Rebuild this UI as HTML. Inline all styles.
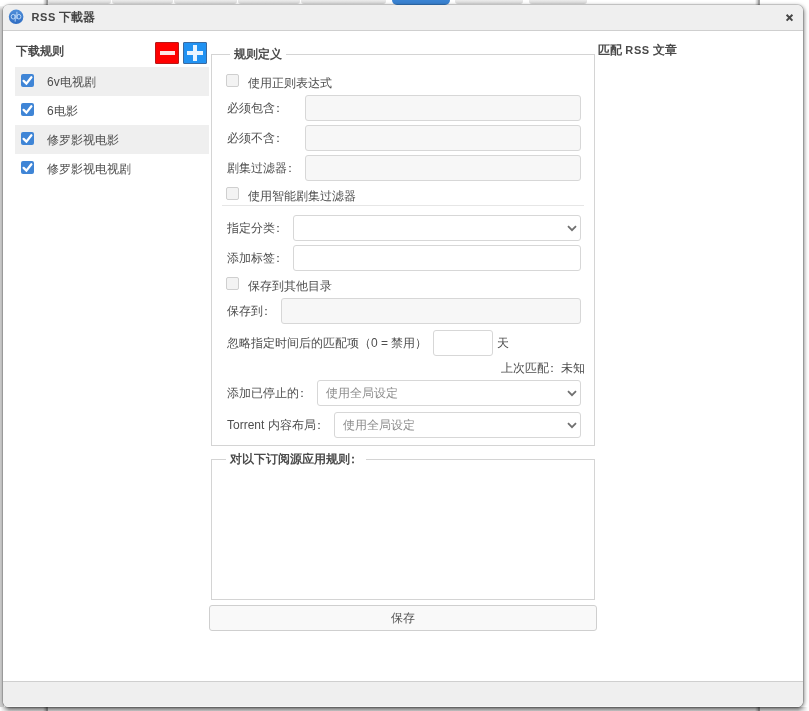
<!DOCTYPE html>
<html><head><meta charset="utf-8">
<style>
*{box-sizing:border-box;margin:0;padding:0}
html,body{width:809px;height:711px;overflow:hidden;}
body{will-change:transform;background:#fafafa;font-family:"Liberation Sans",sans-serif;font-size:12px;color:#4e4e4e}
.abs{position:absolute}
.co{position:relative;left:-3px}
#bg{left:0;top:0;width:809px;height:711px;background:#fff}
.tab{position:absolute;top:-6px;height:10px;background:linear-gradient(#f6f6f6 40%,#d6d6d6);border-radius:0 0 3px 3px}
.vline{position:absolute;width:5px;background:linear-gradient(90deg,rgba(0,0,0,0),rgba(0,0,0,.25) 60%,rgba(0,0,0,.55) 85%,rgba(0,0,0,0))}
#dlg{left:3px;top:5px;width:800px;height:702px;background:#fff;border-radius:6px;box-shadow:0 0 0 1px rgba(0,0,0,.12),1px 1px 4px 0 rgba(0,0,0,.55);overflow:hidden}
#title{left:0;top:0;width:800px;height:26px;background:#efefef;border-bottom:1px solid #cfcfcf}
#foot{left:0;top:676px;width:800px;height:26px;background:#efefef;border-top:1px solid #cfcfcf;box-shadow:inset 0 -1px 0 #f7f7f7}
.lbl{position:absolute;white-space:nowrap;line-height:14px}
.b{font-weight:bold;color:#4a4a4a}
.row{position:absolute;left:12px;width:194px;height:29px}
.row.hl{background:#efefef}
.cb{position:absolute;width:13px;height:13px;border-radius:2px}
.cb.on{background:#3f85d6;}
.cb.off{background:#f3f3f3;border:1px solid #cfcfcf}
.inp{position:absolute;height:26px;border:1px solid #d7d7d7;border-radius:3px;background:#fff}
.inp.dis{background:#f7f7f7}
.fs{position:absolute;border:1px solid #d4d4d4}
.leg{position:absolute;background:#fff;padding:0 4px}
.chev{position:absolute;width:10px;height:7px;line-height:0}
.chev svg,.cb svg{display:block}
</style></head><body>
<div id="bg" class="abs"></div>
<div class="abs" style="left:0;top:707px;width:809px;height:4px;background:linear-gradient(90deg,#fff 0,rgba(255,255,255,0) 9px,rgba(255,255,255,0) 798px,#fff 808px),linear-gradient(#a8a8a8,#cacaca)"></div>
<div class="abs" style="left:0;top:6px;width:4px;height:701px;background:linear-gradient(#f4f4f4,#cdcdcd 4px)"></div>
<div class="tab" style="left:47px;width:64px"></div>
<div class="tab" style="left:112px;width:61px"></div>
<div class="tab" style="left:174px;width:63px"></div>
<div class="tab" style="left:238px;width:62px"></div>
<div class="tab" style="left:301px;width:85px"></div>
<div class="tab" style="left:455px;width:68px"></div>
<div class="tab" style="left:529px;width:58px"></div>
<div class="abs" style="left:392px;top:-4px;width:58px;height:9px;background:#3a83d2;border-radius:0 0 5px 5px"></div>
<div class="vline" style="left:43px;top:0;height:5px"></div>
<div class="vline" style="left:43px;top:706px;height:5px"></div>
<div class="vline" style="left:755px;top:0;height:5px"></div>
<div class="vline" style="left:755px;top:706px;height:5px"></div>

<div id="dlg" class="abs">
  <div id="title" class="abs">
    <svg class="abs" style="left:5px;top:4px" width="16" height="16" viewBox="0 0 16 16">
      <defs><linearGradient id="g1" x1="0" y1="0" x2="0" y2="1"><stop offset="0" stop-color="#4f8fda"/><stop offset="1" stop-color="#2e6cc2"/></linearGradient></defs>
      <circle cx="8.1" cy="7.8" r="7.3" fill="url(#g1)"/>
      <g stroke="#c4defb" stroke-width="0.9" fill="none"><ellipse cx="5.2" cy="7.7" rx="2" ry="2.3"/><path d="M7.2 5.4V12.6"/><ellipse cx="10.9" cy="7.7" rx="2" ry="2.3"/><path d="M8.9 2.8V10"/></g>
    </svg>
    <div class="lbl b" style="left:28.5px;top:5px;font-size:12px;color:#444"><span style="font-size:11px;letter-spacing:0.6px">RSS</span> 下載器</div>
    <svg class="abs" style="left:782px;top:8px" width="9" height="9" viewBox="0 0 9 9"><path d="M1.6 1.8L7.4 7.6M7.4 1.8L1.6 7.6" stroke="#474747" stroke-width="2"/></svg>
  </div>
  <div id="foot" class="abs"></div>
</div>

<!-- content in page coordinates -->
<div class="lbl b" style="left:16px;top:44px">下载规则</div>
<div class="abs" style="left:155px;top:42px;width:24px;height:22px;background:#f00;border:1px solid #b81818;border-radius:1px"></div>
<div class="abs" style="left:160px;top:51px;width:15px;height:4px;background:#fde6e6"></div>
<div class="abs" style="left:183px;top:42px;width:24px;height:22px;background:#2192f2;border:1px solid #3a6aa0;border-radius:1px"></div>
<div class="abs" style="left:187px;top:51px;width:16px;height:4px;background:#e8f4ff"></div>
<div class="abs" style="left:193px;top:45px;width:4px;height:16px;background:#e8f4ff"></div>

<div class="row hl" style="left:15px;top:67px"></div>
<div class="row" style="left:15px;top:96px"></div>
<div class="row hl" style="left:15px;top:125px"></div>
<div class="row" style="left:15px;top:154px"></div>
<div class="cb on" style="left:21px;top:74px"><svg width="13" height="13" viewBox="0 0 13 13"><path d="M2.6 6.9L5.4 9.6L10.4 3.3" stroke="#fff" stroke-width="2.3" fill="none" stroke-linecap="round" stroke-linejoin="miter"/></svg></div>
<div class="lbl" style="left:47px;top:75px">6v电视剧</div>
<div class="cb on" style="left:21px;top:103px"><svg width="13" height="13" viewBox="0 0 13 13"><path d="M2.6 6.9L5.4 9.6L10.4 3.3" stroke="#fff" stroke-width="2.3" fill="none" stroke-linecap="round" stroke-linejoin="miter"/></svg></div>
<div class="lbl" style="left:47px;top:104px">6电影</div>
<div class="cb on" style="left:21px;top:132px"><svg width="13" height="13" viewBox="0 0 13 13"><path d="M2.6 6.9L5.4 9.6L10.4 3.3" stroke="#fff" stroke-width="2.3" fill="none" stroke-linecap="round" stroke-linejoin="miter"/></svg></div>
<div class="lbl" style="left:47px;top:133px">修罗影视电影</div>
<div class="cb on" style="left:21px;top:161px"><svg width="13" height="13" viewBox="0 0 13 13"><path d="M2.6 6.9L5.4 9.6L10.4 3.3" stroke="#fff" stroke-width="2.3" fill="none" stroke-linecap="round" stroke-linejoin="miter"/></svg></div>
<div class="lbl" style="left:47px;top:162px">修罗影视电视剧</div>

<div class="fs" style="left:211px;top:54px;width:384px;height:392px"></div>
<div class="leg lbl b" style="left:230px;top:47px">规则定义</div>
<div class="cb off" style="left:226px;top:74px"></div>
<div class="lbl" style="left:248px;top:76px">使用正则表达式</div>
<div class="lbl" style="left:227px;top:101px">必须包含<span class="co">：</span></div>
<div class="inp dis" style="left:305px;top:95px;width:276px"></div>
<div class="lbl" style="left:227px;top:131px">必须不含<span class="co">：</span></div>
<div class="inp dis" style="left:305px;top:125px;width:276px"></div>
<div class="lbl" style="left:227px;top:161px">剧集过滤器<span class="co">：</span></div>
<div class="inp dis" style="left:305px;top:155px;width:276px"></div>
<div class="cb off" style="left:226px;top:187px"></div>
<div class="lbl" style="left:248px;top:189px">使用智能剧集过滤器</div>
<div class="abs" style="left:222px;top:205px;width:362px;height:1px;background:#e6e6e6"></div>
<div class="lbl" style="left:227px;top:221px">指定分类<span class="co">：</span></div>
<div class="inp" style="left:293px;top:215px;width:288px"></div>
<div class="chev" style="left:567px;top:225px"><svg width="10" height="7" viewBox="0 0 10 7"><path d="M1 1.2L5 5.2L9 1.2" stroke="#707070" stroke-width="1.8" fill="none"/></svg></div>
<div class="lbl" style="left:227px;top:251px">添加标签<span class="co">：</span></div>
<div class="inp" style="left:293px;top:245px;width:288px"></div>
<div class="cb off" style="left:226px;top:277px"></div>
<div class="lbl" style="left:248px;top:279px">保存到其他目录</div>
<div class="lbl" style="left:227px;top:304px">保存到<span class="co">：</span></div>
<div class="inp dis" style="left:281px;top:298px;width:300px"></div>
<div class="lbl" style="left:227px;top:336px">忽略指定时间后的匹配项（0 = 禁用）</div>
<div class="inp" style="left:433px;top:330px;width:60px"></div>
<div class="lbl" style="left:497px;top:336px">天</div>
<div class="lbl" style="left:501px;top:361px">上次匹配<span class="co">：</span>未知</div>
<div class="lbl" style="left:227px;top:386px">添加已停止的<span class="co">：</span></div>
<div class="inp" style="left:317px;top:380px;width:264px"></div>
<div class="lbl" style="left:326px;top:386px;color:#8c8c8c">使用全局设定</div>
<div class="chev" style="left:567px;top:390px"><svg width="10" height="7" viewBox="0 0 10 7"><path d="M1 1.2L5 5.2L9 1.2" stroke="#707070" stroke-width="1.8" fill="none"/></svg></div>
<div class="lbl" style="left:227px;top:418px">Torrent 内容布局<span class="co">：</span></div>
<div class="inp" style="left:334px;top:412px;width:247px"></div>
<div class="lbl" style="left:343px;top:418px;color:#8c8c8c">使用全局设定</div>
<div class="chev" style="left:567px;top:422px"><svg width="10" height="7" viewBox="0 0 10 7"><path d="M1 1.2L5 5.2L9 1.2" stroke="#707070" stroke-width="1.8" fill="none"/></svg></div>
<div class="fs" style="left:211px;top:459px;width:384px;height:141px"></div>
<div class="leg lbl b" style="left:226px;top:452px">对以下订阅源应用规则<span class="co">：</span></div>
<div class="abs" style="left:209px;top:605px;width:388px;height:26px;background:#f9f9f9;border:1px solid #cfcfcf;border-radius:3px"></div>
<div class="lbl" style="left:391px;top:611px;color:#555">保存</div>
<div class="lbl b" style="left:598px;top:43px">匹配 <span style="font-size:11px;letter-spacing:0.6px">RSS</span> 文章</div>

</body></html>
